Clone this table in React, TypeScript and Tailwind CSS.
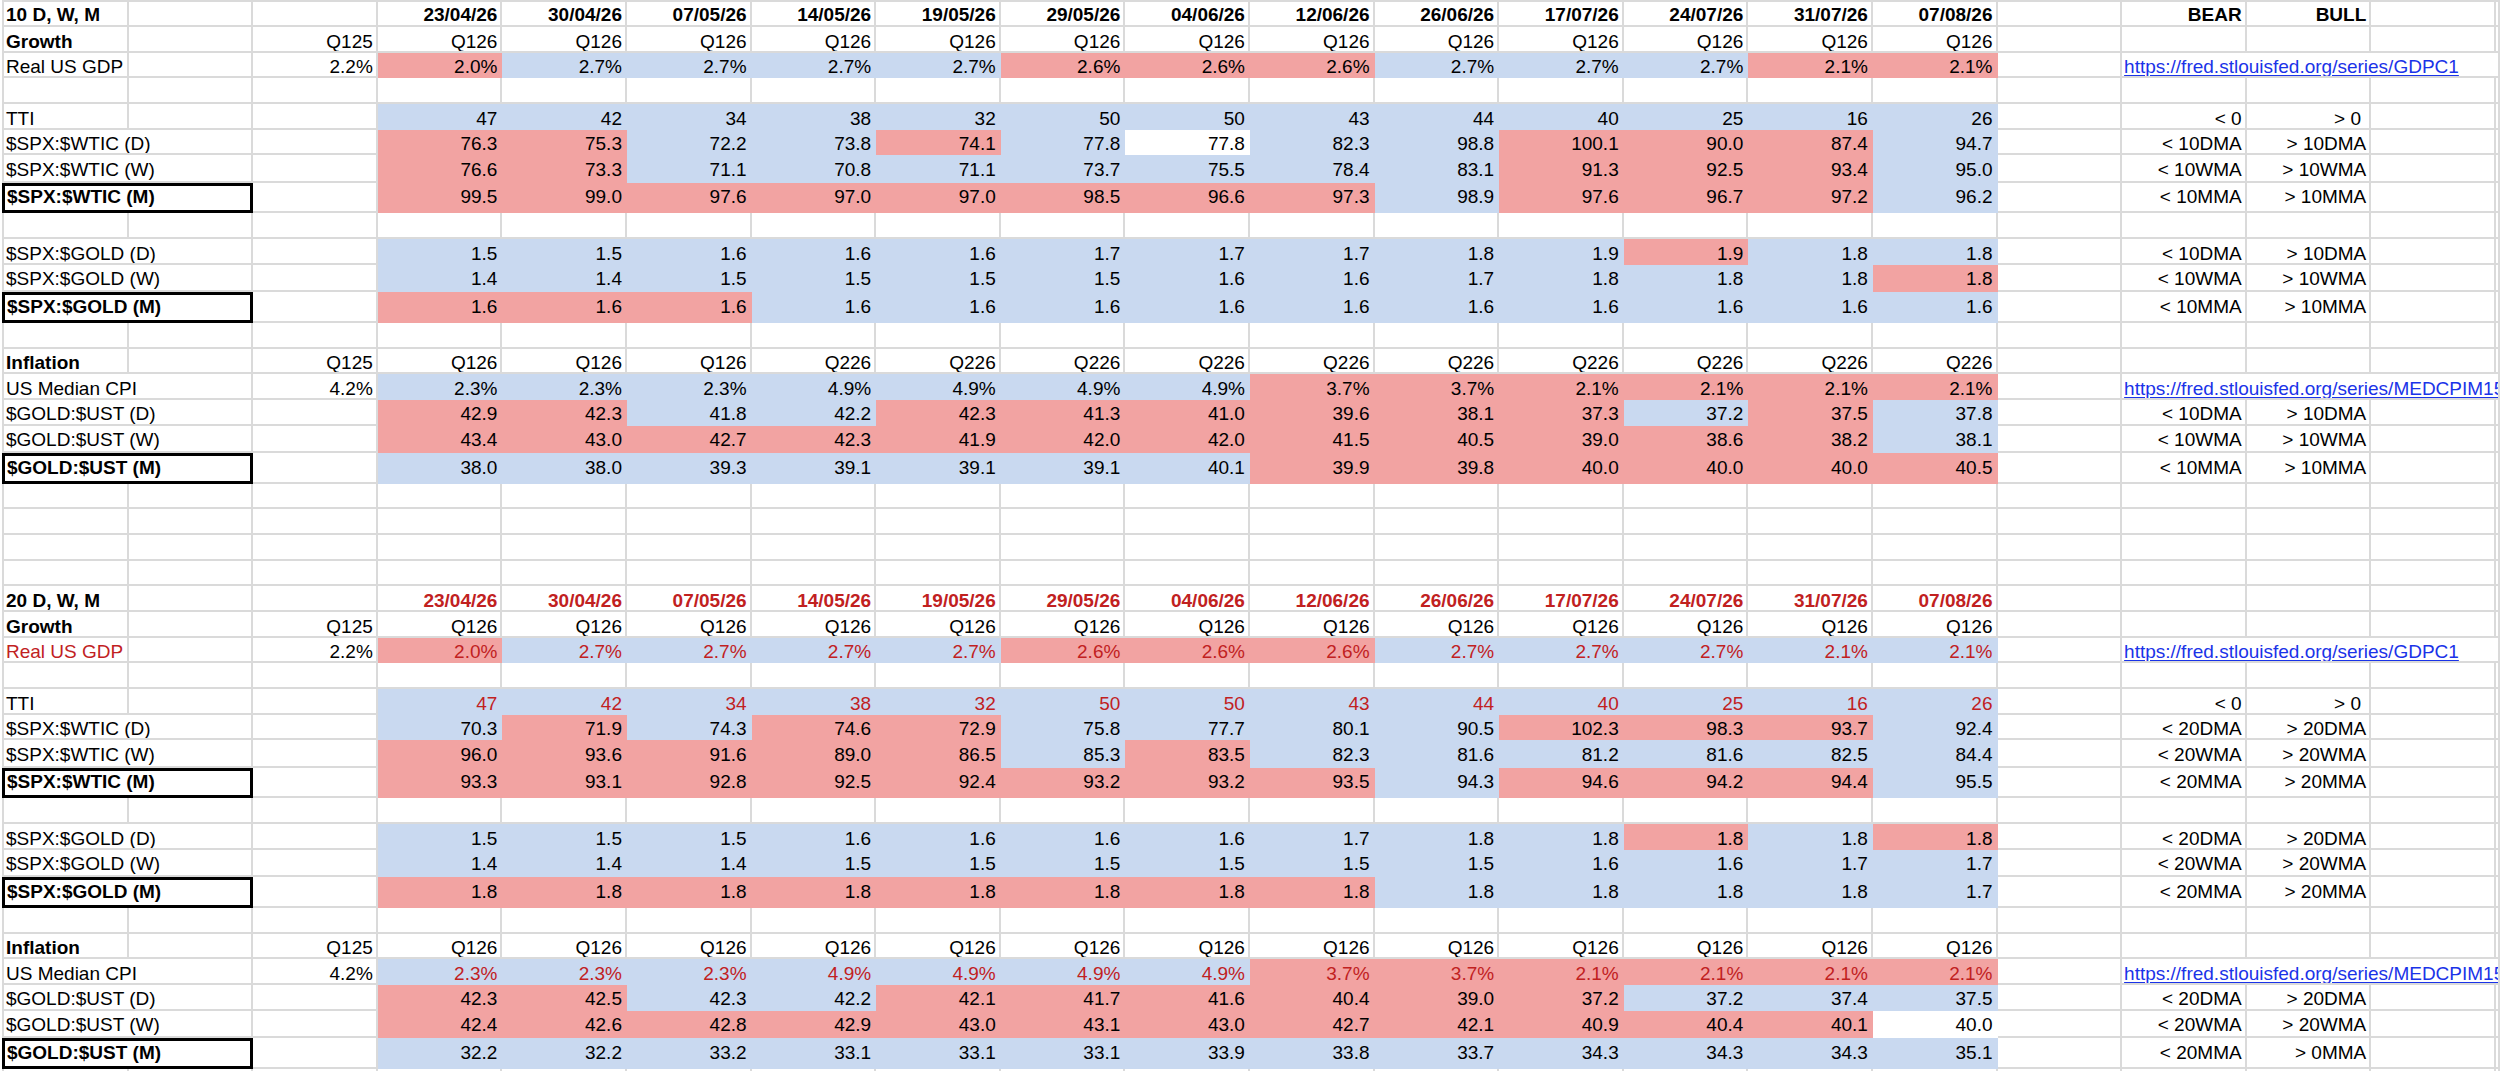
import React from 'react'

const DATES = ['23/04/26', '30/04/26', '07/05/26', '14/05/26', '19/05/26', '29/05/26', '04/06/26', '12/06/26', '26/06/26', '17/07/26', '24/07/26', '31/07/26', '07/08/26']
const Q126 = Array(13).fill('Q126')
const TTI = ['47', '42', '34', '38', '32', '50', '50', '43', '44', '40', '25', '16', '26']
const GDP_LINK = 'https://fred.stlouisfed.org/series/GDPC1'
const CPI_LINK = 'https://fred.stlouisfed.org/series/MEDCPIM15'

type Row = {
  kind?: 'n' | 'w' | 'm'
  first?: boolean
  label?: string
  labelBold?: boolean
  labelRed?: boolean
  wide?: boolean
  c?: string
  vals?: string[]
  fills?: string
  valsRed?: boolean
  valsBold?: boolean
  bear?: string
  bull?: string
  headBold?: boolean
  link?: string
}

const blank: Row = {}

const section1: Row[] = [
  { first: true, label: '10 D, W, M', labelBold: true, vals: DATES, valsBold: true, bear: 'BEAR', bull: 'BULL', headBold: true },
  { label: 'Growth', labelBold: true, c: 'Q125', vals: Q126 },
  { label: 'Real US GDP', c: '2.2%', vals: ['2.0%', '2.7%', '2.7%', '2.7%', '2.7%', '2.6%', '2.6%', '2.6%', '2.7%', '2.7%', '2.7%', '2.1%', '2.1%'], fills: 'RBBBBRRRBBBRR', link: GDP_LINK },
  blank,
  { label: 'TTI', vals: TTI, fills: 'BBBBBBBBBBBBB', bear: '< 0', bull: '> 0\u00a0' },
  { label: '$SPX:$WTIC (D)', wide: true, vals: ['76.3', '75.3', '72.2', '73.8', '74.1', '77.8', '77.8', '82.3', '98.8', '100.1', '90.0', '87.4', '94.7'], fills: 'RRBBRBWBBRRRB', bear: '< 10DMA', bull: '> 10DMA' },
  { kind: 'w', label: '$SPX:$WTIC (W)', wide: true, vals: ['76.6', '73.3', '71.1', '70.8', '71.1', '73.7', '75.5', '78.4', '83.1', '91.3', '92.5', '93.4', '95.0'], fills: 'RRBBBBBBBRRRB', bear: '< 10WMA', bull: '> 10WMA' },
  { kind: 'm', label: '$SPX:$WTIC (M)', vals: ['99.5', '99.0', '97.6', '97.0', '97.0', '98.5', '96.6', '97.3', '98.9', '97.6', '96.7', '97.2', '96.2'], fills: 'RRRRRRRRBRRRB', bear: '< 10MMA', bull: '> 10MMA' },
  blank,
  { label: '$SPX:$GOLD (D)', wide: true, vals: ['1.5', '1.5', '1.6', '1.6', '1.6', '1.7', '1.7', '1.7', '1.8', '1.9', '1.9', '1.8', '1.8'], fills: 'BBBBBBBBBBRBB', bear: '< 10DMA', bull: '> 10DMA' },
  { kind: 'w', label: '$SPX:$GOLD (W)', wide: true, vals: ['1.4', '1.4', '1.5', '1.5', '1.5', '1.5', '1.6', '1.6', '1.7', '1.8', '1.8', '1.8', '1.8'], fills: 'BBBBBBBBBBBBR', bear: '< 10WMA', bull: '> 10WMA' },
  { kind: 'm', label: '$SPX:$GOLD (M)', vals: Array(13).fill('1.6'), fills: 'RRRBBBBBBBBBB', bear: '< 10MMA', bull: '> 10MMA' },
  blank,
  { label: 'Inflation', labelBold: true, c: 'Q125', vals: ['Q126', 'Q126', 'Q126', ...Array(10).fill('Q226')] },
  { label: 'US Median CPI', wide: true, c: '4.2%', vals: ['2.3%', '2.3%', '2.3%', '4.9%', '4.9%', '4.9%', '4.9%', '3.7%', '3.7%', '2.1%', '2.1%', '2.1%', '2.1%'], fills: 'BBBBBBBRRRRRR', link: CPI_LINK },
  { label: '$GOLD:$UST (D)', wide: true, vals: ['42.9', '42.3', '41.8', '42.2', '42.3', '41.3', '41.0', '39.6', '38.1', '37.3', '37.2', '37.5', '37.8'], fills: 'RRBBRRRRRRBRB', bear: '< 10DMA', bull: '> 10DMA' },
  { kind: 'w', label: '$GOLD:$UST (W)', wide: true, vals: ['43.4', '43.0', '42.7', '42.3', '41.9', '42.0', '42.0', '41.5', '40.5', '39.0', '38.6', '38.2', '38.1'], fills: 'RRRRRRRRRRRRB', bear: '< 10WMA', bull: '> 10WMA' },
  { kind: 'm', label: '$GOLD:$UST (M)', vals: ['38.0', '38.0', '39.3', '39.1', '39.1', '39.1', '40.1', '39.9', '39.8', '40.0', '40.0', '40.0', '40.5'], fills: 'BBBBBBBRRRRRR', bear: '< 10MMA', bull: '> 10MMA' },
]

const section2: Row[] = [
  { label: '20 D, W, M', labelBold: true, vals: DATES, valsBold: true, valsRed: true },
  { label: 'Growth', labelBold: true, c: 'Q125', vals: Q126 },
  { label: 'Real US GDP', labelRed: true, c: '2.2%', vals: ['2.0%', '2.7%', '2.7%', '2.7%', '2.7%', '2.6%', '2.6%', '2.6%', '2.7%', '2.7%', '2.7%', '2.1%', '2.1%'], fills: 'RBBBBRRRBBBBB', valsRed: true, link: GDP_LINK },
  blank,
  { label: 'TTI', vals: TTI, fills: 'BBBBBBBBBBBBB', valsRed: true, bear: '< 0', bull: '> 0\u00a0' },
  { label: '$SPX:$WTIC (D)', wide: true, vals: ['70.3', '71.9', '74.3', '74.6', '72.9', '75.8', '77.7', '80.1', '90.5', '102.3', '98.3', '93.7', '92.4'], fills: 'BRBRRBBBBRRRB', bear: '< 20DMA', bull: '> 20DMA' },
  { kind: 'w', label: '$SPX:$WTIC (W)', wide: true, vals: ['96.0', '93.6', '91.6', '89.0', '86.5', '85.3', '83.5', '82.3', '81.6', '81.2', '81.6', '82.5', '84.4'], fills: 'RRRRRBRBBBBBB', bear: '< 20WMA', bull: '> 20WMA' },
  { kind: 'm', label: '$SPX:$WTIC (M)', vals: ['93.3', '93.1', '92.8', '92.5', '92.4', '93.2', '93.2', '93.5', '94.3', '94.6', '94.2', '94.4', '95.5'], fills: 'RRRRRRRRBRRRB', bear: '< 20MMA', bull: '> 20MMA' },
  blank,
  { label: '$SPX:$GOLD (D)', wide: true, vals: ['1.5', '1.5', '1.5', '1.6', '1.6', '1.6', '1.6', '1.7', '1.8', '1.8', '1.8', '1.8', '1.8'], fills: 'BBBBBBBBBBRBR', bear: '< 20DMA', bull: '> 20DMA' },
  { kind: 'w', label: '$SPX:$GOLD (W)', wide: true, vals: ['1.4', '1.4', '1.4', '1.5', '1.5', '1.5', '1.5', '1.5', '1.5', '1.6', '1.6', '1.7', '1.7'], fills: 'BBBBBBBBBBBBB', bear: '< 20WMA', bull: '> 20WMA' },
  { kind: 'm', label: '$SPX:$GOLD (M)', vals: [...Array(12).fill('1.8'), '1.7'], fills: 'RRRRRRRRBBBBB', bear: '< 20MMA', bull: '> 20MMA' },
  blank,
  { label: 'Inflation', labelBold: true, c: 'Q125', vals: Q126 },
  { label: 'US Median CPI', wide: true, c: '4.2%', vals: ['2.3%', '2.3%', '2.3%', '4.9%', '4.9%', '4.9%', '4.9%', '3.7%', '3.7%', '2.1%', '2.1%', '2.1%', '2.1%'], fills: 'BBBBBBBRRRRRR', valsRed: true, link: CPI_LINK },
  { label: '$GOLD:$UST (D)', wide: true, vals: ['42.3', '42.5', '42.3', '42.2', '42.1', '41.7', '41.6', '40.4', '39.0', '37.2', '37.2', '37.4', '37.5'], fills: 'RRBBRRRRRRBBB', bear: '< 20DMA', bull: '> 20DMA' },
  { kind: 'w', label: '$GOLD:$UST (W)', wide: true, vals: ['42.4', '42.6', '42.8', '42.9', '43.0', '43.1', '43.0', '42.7', '42.1', '40.9', '40.4', '40.1', '40.0'], fills: 'RRRRRRRRRRRRW', bear: '< 20WMA', bull: '> 20WMA' },
  { kind: 'm', label: '$GOLD:$UST (M)', vals: ['32.2', '32.2', '33.2', '33.1', '33.1', '33.1', '33.9', '33.8', '33.7', '34.3', '34.3', '34.3', '35.1'], fills: 'BBBBBBBBBBBBB', bear: '< 20MMA', bull: '> 0MMA' },
]

const rows: Row[] = [...section1, blank, blank, blank, blank, ...section2, blank]

const fillClass: Record<string, string> = {
  R: 'bg-[#f2a3a2] border-[#f2a3a2]',
  B: 'bg-[#c9d9f0] border-[#c9d9f0]',
  W: 'bg-white border-white',
  '-': 'border-[#dadada]',
}

function SheetRow({ r }: { r: Row }) {
  const height = r.kind === 'm' ? 'h-[30.5px]' : r.kind === 'w' ? 'h-[27.5px]' : r.first ? 'h-[27px]' : 'h-[25.7px]'
  const top = r.first ? 'border-t-2 pt-[2.5px]' : 'pt-[4.5px]'
  const base = `shrink-0 box-border border-r-2 border-b-2 ${top} leading-[19px] whitespace-nowrap overflow-hidden`
  const grid = 'border-[#dadada]'
  const cell = `${base} ${grid} w-[124.6px]`
  const ink = r.valsRed ? 'text-[#c1211f]' : 'text-black'

  return (
    <div className={`flex ${height}`}>
      {/* label column(s) */}
      {r.kind === 'm' ? (
        <div className="shrink-0 box-border w-[251.2px] border-[3px] border-black pt-[1.5px] pl-[2px] leading-[19px] font-bold whitespace-nowrap">
          {r.label}
        </div>
      ) : r.wide ? (
        <div className={`${base} ${grid} border-l-2 w-[251.2px] pl-[2px]`}>{r.label}</div>
      ) : (
        <>
          <div className={`${base} ${grid} border-l-2 w-[126.6px] pl-[2px] ${r.labelBold ? 'font-bold' : ''} ${r.labelRed ? 'text-[#c1211f]' : ''}`}>
            {r.label}
          </div>
          <div className={cell} />
        </>
      )}

      {/* previous quarter */}
      <div className={`${cell} text-right pr-[3px]`}>{r.c}</div>

      {/* weekly columns */}
      {Array.from({ length: 13 }).map((_, i) => {
        const f = r.fills ? r.fills[i] : '-'
        return (
          <div
            key={i}
            className={`${base} ${fillClass[f]} w-[124.6px] text-right pr-[3px] ${ink} ${r.valsBold ? 'font-bold' : ''}`}
          >
            {r.vals?.[i]}
          </div>
        )
      })}

      <div className={cell} />

      {r.link ? (
        <div className={`${base} ${grid} flex-1 min-w-0 pl-[2px]`}>
          <a href={r.link} className="text-[#1a33e8] underline underline-offset-[2px]">{r.link}</a>
        </div>
      ) : (
        <>
          <div className={`${cell} text-right pr-[3px] ${r.headBold ? 'font-bold' : ''}`}>{r.bear}</div>
          <div className={`${cell} text-right pr-[3px] ${r.headBold ? 'font-bold' : ''}`}>{r.bull}</div>
          <div className={cell} />
          <div className={`${base} ${grid} flex-1 min-w-0`} />
        </>
      )}
    </div>
  )
}

export default function App() {
  return (
    <div className="w-[2500px] h-[1071px] overflow-hidden bg-white text-black text-[19px] font-['Liberation_Sans',Arial,sans-serif]">
      <div className="pl-[2px]">
        {rows.map((r, i) => (
          <SheetRow key={i} r={r} />
        ))}
      </div>
    </div>
  )
}
